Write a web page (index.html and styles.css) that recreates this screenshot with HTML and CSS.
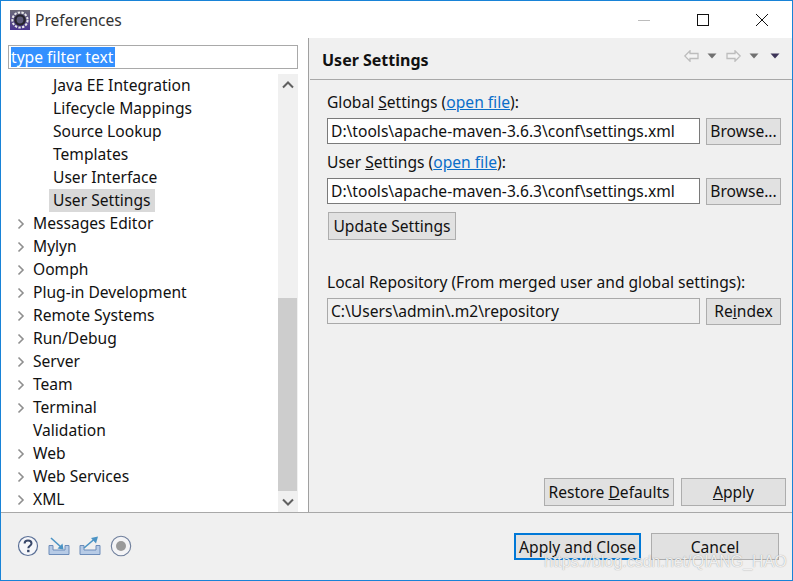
FILE: index.html
```html
<!DOCTYPE html>
<html lang="en">
<head>
<meta charset="utf-8">
<title>Preferences</title>
<link rel="stylesheet" href="styles.css">
</head>
<body>
<div class="window">
  <header class="titlebar">
    <svg class="app-icon" width="20" height="20" viewBox="0 0 20 20">
      <defs><linearGradient id="appbg" x1="0" y1="0" x2="0" y2="1"><stop offset="0" stop-color="#6b6a78"/><stop offset="1" stop-color="#4a3590"/></linearGradient></defs>
      <rect width="20" height="20" fill="url(#appbg)"/>
      <circle cx="10" cy="10" r="7.6" fill="none" stroke="#e8e8e8" stroke-width="2" stroke-dasharray="2.4 1.3"/>
      <circle cx="10" cy="10" r="5.8" fill="#26242e"/>
      <circle cx="10" cy="10" r="3.4" fill="#5d5a78"/>
    </svg>
    <span class="title">Preferences</span>
    <div class="controls">
      <svg width="14" height="14" viewBox="0 0 14 14"><path d="M1 7.5H13" stroke="#bcbcbc" fill="none"/></svg>
      <svg width="14" height="14" viewBox="0 0 14 14"><rect x="1.5" y="1.5" width="11" height="11" stroke="#111" fill="none"/></svg>
      <svg width="14" height="14" viewBox="0 0 14 14"><path d="M1 1L13 13M13 1L1 13" stroke="#111" fill="none"/></svg>
    </div>
  </header>
  <div class="main">
    <aside class="left">
      <div class="filter"><span class="filter-sel">type filter text</span></div>
      <div class="tree-wrap">
        <ul class="tree">
          <li class="row child">Java EE Integration</li>
          <li class="row child">Lifecycle Mappings</li>
          <li class="row child">Source Lookup</li>
          <li class="row child">Templates</li>
          <li class="row child">User Interface</li>
          <li class="row child"><span class="selected">User Settings</span></li>
          <li class="row"><svg class="chev" width="8" height="12" viewBox="0 0 8 12"><path d="M1.5 1.5L6 6L1.5 10.5"/></svg>Messages Editor</li>
          <li class="row"><svg class="chev" width="8" height="12" viewBox="0 0 8 12"><path d="M1.5 1.5L6 6L1.5 10.5"/></svg>Mylyn</li>
          <li class="row"><svg class="chev" width="8" height="12" viewBox="0 0 8 12"><path d="M1.5 1.5L6 6L1.5 10.5"/></svg>Oomph</li>
          <li class="row"><svg class="chev" width="8" height="12" viewBox="0 0 8 12"><path d="M1.5 1.5L6 6L1.5 10.5"/></svg>Plug-in Development</li>
          <li class="row"><svg class="chev" width="8" height="12" viewBox="0 0 8 12"><path d="M1.5 1.5L6 6L1.5 10.5"/></svg>Remote Systems</li>
          <li class="row"><svg class="chev" width="8" height="12" viewBox="0 0 8 12"><path d="M1.5 1.5L6 6L1.5 10.5"/></svg>Run/Debug</li>
          <li class="row"><svg class="chev" width="8" height="12" viewBox="0 0 8 12"><path d="M1.5 1.5L6 6L1.5 10.5"/></svg>Server</li>
          <li class="row"><svg class="chev" width="8" height="12" viewBox="0 0 8 12"><path d="M1.5 1.5L6 6L1.5 10.5"/></svg>Team</li>
          <li class="row"><svg class="chev" width="8" height="12" viewBox="0 0 8 12"><path d="M1.5 1.5L6 6L1.5 10.5"/></svg>Terminal</li>
          <li class="row leaf">Validation</li>
          <li class="row"><svg class="chev" width="8" height="12" viewBox="0 0 8 12"><path d="M1.5 1.5L6 6L1.5 10.5"/></svg>Web</li>
          <li class="row"><svg class="chev" width="8" height="12" viewBox="0 0 8 12"><path d="M1.5 1.5L6 6L1.5 10.5"/></svg>Web Services</li>
          <li class="row"><svg class="chev" width="8" height="12" viewBox="0 0 8 12"><path d="M1.5 1.5L6 6L1.5 10.5"/></svg>XML</li>
        </ul>
        <div class="scrollbar">
          <div class="sb-btn"><svg width="12" height="8" viewBox="0 0 12 8"><path d="M1 6.5L6 1.5L11 6.5"/></svg></div>
          <div class="sb-track"><div class="sb-thumb"></div></div>
          <div class="sb-btn"><svg width="12" height="8" viewBox="0 0 12 8"><path d="M1 1.5L6 6.5L11 1.5"/></svg></div>
        </div>
      </div>
    </aside>
    <section class="right">
      <div class="page-head">
        <h1 class="page-title">User Settings</h1>
        <div class="nav">
          <svg width="15" height="12" viewBox="0 0 15 12"><path class="nav-arrow" d="M0.8 6L6 0.8V3.5H14V8.5H6V11.2Z"/></svg>
          <svg class="tri-gap" width="10" height="6" viewBox="0 0 10 6"><path class="tri" d="M0.5 0.5H9.5L5 5.5Z"/></svg>
          <svg class="nav-gap" width="15" height="12" viewBox="0 0 15 12"><path class="nav-arrow" d="M14.2 6L9 0.8V3.5H1V8.5H9V11.2Z"/></svg>
          <svg class="tri-gap" width="10" height="6" viewBox="0 0 10 6"><path class="tri" d="M0.5 0.5H9.5L5 5.5Z"/></svg>
          <svg class="menu-gap" width="10" height="6" viewBox="0 0 10 6"><path d="M0.5 0.5H9.5L5 5.5Z" fill="#3d3458"/></svg>
        </div>
      </div>
      <div class="form">
        <div class="label">Global <u>S</u>ettings (<a class="link">open file</a>):</div>
        <div class="field-row">
          <div class="input">D:\tools\apache-maven-3.6.3\conf\settings.xml</div>
          <button class="btn side">Browse...</button>
        </div>
        <div class="label label-tight">User <u>S</u>ettings (<a class="link">open file</a>):</div>
        <div class="field-row">
          <div class="input">D:\tools\apache-maven-3.6.3\conf\settings.xml</div>
          <button class="btn side">Browse...</button>
        </div>
        <button class="btn update low">Update Settings</button>
        <div class="label label-repo">Local Repository (From merged user and global settings):</div>
        <div class="field-row">
          <div class="input readonly">C:\Users\admin\.m2\repository</div>
          <button class="btn side">Re<u>i</u>ndex</button>
        </div>
      </div>
      <div class="page-actions">
        <button class="btn restore low">Restore <u>D</u>efaults</button>
        <button class="btn apply low"><u>A</u>pply</button>
      </div>
    </section>
  </div>
  <footer class="footer">
    <div class="tools">
      <svg width="22" height="22" viewBox="0 0 22 22"><circle cx="11" cy="11" r="9.5" fill="#f6f7fa" stroke="#5a6f96" stroke-width="1.2"/><path d="M7.6 8.6C7.6 6.5 9.2 5.4 11 5.4C13 5.4 14.5 6.6 14.5 8.4C14.5 10.6 11.3 10.8 11.3 13.2" fill="none" stroke="#39486a" stroke-width="2"/><rect x="10.1" y="14.8" width="2.4" height="2.4" fill="#39486a"/></svg>
      <svg width="22" height="20" viewBox="0 0 22 20"><path d="M1 9.5H5V14H17V9.5H21V18.5H1Z" fill="#b7cbe6" stroke="#6c8cb9"/><path d="M3 2L13.5 11.5" stroke="#4b93c4" stroke-width="1.6" fill="none"/><path d="M15.5 13.5L14.5 7.5L9.5 12.5Z" fill="#4b93c4"/></svg>
      <svg width="22" height="20" viewBox="0 0 22 20"><path d="M1 9.5H5V14H17V9.5H21V18.5H1Z" fill="#b7cbe6" stroke="#6c8cb9"/><path d="M5 12L15.5 3" stroke="#4b93c4" stroke-width="1.6" fill="none"/><path d="M19 0.5L12 2L17 7.5Z" fill="#4b93c4"/></svg>
      <svg width="22" height="22" viewBox="0 0 22 22"><circle cx="11" cy="11" r="9.7" fill="#f4f4f6" stroke="#6f7f9c" stroke-width="1.1"/><circle cx="11" cy="11" r="5" fill="#9a9a9a"/></svg>
    </div>
    <div class="dialog-actions">
      <button class="btn default low">Apply and Close</button>
      <button class="btn cancel low">Cancel</button>
    </div>
  </footer>
  <div class="watermark">https://blog.csdn.net/QIANG_HAO</div>
</div>
</body>
</html>
```
FILE: styles.css
```css
* { box-sizing: border-box; }
html, body { margin: 0; padding: 0; }
body {
  width: 793px;
  height: 581px;
  overflow: hidden;
  font-family: "Noto Sans", "Open Sans", sans-serif;
  font-size: 15.6px;
  color: #111;
}
.window {
  position: relative;
  width: 793px;
  height: 581px;
  border: 1px solid #1883d7;
  display: flex;
  flex-direction: column;
  background: #f0f0f0;
}
.titlebar {
  height: 37px;
  flex: none;
  background: #fff;
  display: flex;
  align-items: center;
  padding: 1px 0 0 9px;
}
.app-icon { flex: none; }
.title { margin-left: 5px; color: #333; }
.controls {
  margin-left: auto;
  display: flex;
  gap: 45px;
  padding-right: 23px;
}
.main {
  height: 475px;
  flex: none;
  display: flex;
  border-bottom: 1px solid #a8a8a8;
}
.left {
  width: 308px;
  flex: none;
  background: #fff;
  border-right: 1px solid #a0a0a0;
  padding: 7px 10px 0 7px;
  display: flex;
  flex-direction: column;
}
.filter {
  height: 24px;
  flex: none;
  border: 1px solid #a9a9a9;
  padding: 1px 2px;
  line-height: 20px;
}
.filter-sel {
  display: inline-block;
  height: 20px;
  line-height: 20px;
  padding-right: 2px;
  background: #3390ff;
  color: #fff;
}
.tree-wrap {
  margin-top: 5px;
  display: flex;
  flex: 1;
  min-height: 0;
}
.tree {
  list-style: none;
  margin: 0;
  padding: 0;
  flex: 1;
}
.row {
  height: 23px;
  line-height: 23px;
  padding-left: 9px;
  display: flex;
  align-items: center;
  white-space: nowrap;
}
.chev {
  flex: none;
  margin-right: 8px;
  fill: none;
  stroke: #8f8f8f;
  stroke-width: 1.6;
}
.child { padding-left: 45px; }
.leaf { padding-left: 25px; }
.selected {
  background: #d9d9d9;
  margin-left: -4px;
  padding: 0 4px;
  height: 23px;
}
.scrollbar {
  width: 20px;
  flex: none;
  background: #f0f0f0;
  display: flex;
  flex-direction: column;
}
.sb-btn {
  height: 21px;
  flex: none;
  display: flex;
  align-items: center;
  justify-content: center;
}
.sb-btn svg { fill: none; stroke: #606060; stroke-width: 2; }
.sb-track {
  flex: 1;
  display: flex;
  flex-direction: column;
  justify-content: flex-end;
}
.sb-thumb {
  width: 19px;
  height: 193px;
  background: #cdcdcd;
}
.right {
  flex: 1;
  min-width: 0;
  display: flex;
  flex-direction: column;
  padding-left: 1px;
}
.page-head {
  height: 42px;
  flex: none;
  border-bottom: 1px solid #a8a8a8;
  display: flex;
  align-items: center;
  padding: 2px 12px 0 12px;
}
.page-title {
  margin: 0;
  font-size: 16px;
  font-weight: 700;
}
.nav {
  margin-left: auto;
  display: flex;
  align-items: center;
  padding-bottom: 8px;
}
.nav-arrow { fill: #f4f4f4; stroke: #bdbdbd; stroke-width: 1.3; }
.tri { fill: #707070; }
.tri-gap { margin-left: 8px; }
.nav-gap { margin-left: 9px; }
.menu-gap { margin-left: 11px; }
.form {
  padding: 10px 11px 0 17px;
  flex: none;
}
.label {
  height: 24px;
  line-height: 24px;
  white-space: nowrap;
}
.label-tight { margin-top: 5px; }
.label-repo { margin-top: 30px; }
.link { color: #0a6ec9; text-decoration: underline; }
.field-row {
  display: flex;
  gap: 6px;
  margin-top: 4px;
  height: 27px;
}
.input {
  flex: 1;
  min-width: 0;
  height: 26px;
  border: 1px solid #7a7a7a;
  background: #fff;
  padding: 0 3px;
  line-height: 24px;
  white-space: nowrap;
  overflow: hidden;
}
.input.readonly { background: #f0f0f0; border-color: #a9a9a9; }
.btn {
  font: inherit;
  color: #111;
  background: #e1e1e1;
  border: 1px solid #adadad;
  padding: 0;
  margin: 0;
  white-space: nowrap;
  line-height: 1;
}
.low { padding-top: 2px; }
.side { width: 75px; height: 27px; flex: none; }
.update {
  display: block;
  width: 128px;
  height: 28px;
  margin: 7px 0 0 1px;
}
.page-actions {
  margin-top: auto;
  padding: 0 6px 6px 0;
  display: flex;
  justify-content: flex-end;
  gap: 7px;
}
.restore { width: 130px; height: 28px; }
.apply { width: 105px; height: 28px; }
.footer {
  flex: 1;
  display: flex;
  align-items: flex-start;
  justify-content: space-between;
  padding: 20px 13px 0 16px;
}
.tools {
  display: flex;
  align-items: center;
  gap: 9px;
  padding-top: 2px;
}
.dialog-actions {
  display: flex;
  gap: 10px;
}
.default {
  width: 127px;
  height: 27px;
  border: 2px solid #0078d7;
}
.cancel { width: 128px; height: 27px; }
.watermark {
  position: absolute;
  left: 543px;
  top: 552px;
  font-family: "Liberation Sans", sans-serif;
  font-size: 16px;
  color: rgba(255, 255, 255, 0.85);
  text-shadow: 0 0 1px rgba(80, 80, 80, 0.6);
  white-space: nowrap;
  pointer-events: none;
}
```
